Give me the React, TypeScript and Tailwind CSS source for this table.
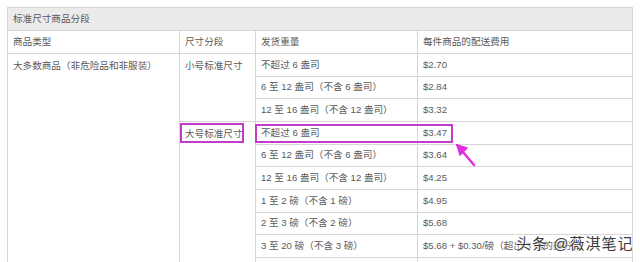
const rows: { weight: string; fee: string }[] = [
  { weight: "不超过 6 盎司", fee: "$2.70" },
  { weight: "6 至 12 盎司（不含 6 盎司）", fee: "$2.84" },
  { weight: "12 至 16 盎司（不含 12 盎司）", fee: "$3.32" },
  { weight: "不超过 6 盎司", fee: "$3.47" },
  { weight: "6 至 12 盎司（不含 6 盎司）", fee: "$3.64" },
  { weight: "12 至 16 盎司（不含 12 盎司）", fee: "$4.25" },
  { weight: "1 至 2 磅（不含 1 磅）", fee: "$4.95" },
  { weight: "2 至 3 磅（不含 2 磅）", fee: "$5.68" },
  { weight: "3 至 20 磅（不含 3 磅）", fee: "$5.68 + $0.30/磅（超出 3 磅的部分）" },
];

const cell = "border border-[#d6d6d6] pl-[5px] align-middle whitespace-nowrap overflow-hidden";

export default function App() {
  return (
    <div
      className="relative w-[640px] h-[262px] bg-white overflow-hidden text-[#5a5a5a] text-[9.6px]"
      style={{ fontFamily: '"Liberation Sans", "Noto Sans CJK SC", sans-serif' }}
    >
      <div className="pt-[7px] pl-[7px]">
        <table className="border-collapse table-fixed w-[625px]">
          <colgroup>
            <col className="w-[172px]" />
            <col className="w-[76px]" />
            <col className="w-[162px]" />
            <col className="w-[215px]" />
          </colgroup>
          <tbody>
            <tr className="h-[23px] bg-[#ebebeb]">
              <td colSpan={4} className={cell}>标准尺寸商品分段</td>
            </tr>
            <tr className="h-[23px]">
              <td className={cell}>商品类型</td>
              <td className={cell}>尺寸分段</td>
              <td className={cell}>发货重量</td>
              <td className={cell}>每件商品的配送费用</td>
            </tr>
            {rows.map((r, i) => (
              <tr key={i} className="h-[22.67px]">
                {i === 0 && (
                  <td rowSpan={10} className={`${cell} align-top pt-[5px]`}>
                    大多数商品（非危险品和非服装）
                  </td>
                )}
                {i === 0 && (
                  <td rowSpan={3} className={`${cell} align-top pt-[5px]`}>
                    小号标准尺寸
                  </td>
                )}
                {i === 3 && (
                  <td rowSpan={7} className={`${cell} align-top pt-[5px]`}>
                    大号标准尺寸
                  </td>
                )}
                <td className={cell}>{r.weight}</td>
                <td className={cell}>{r.fee}</td>
              </tr>
            ))}
            <tr className="h-[22px]">
              <td className={cell}></td>
              <td className={cell}></td>
            </tr>
          </tbody>
        </table>
      </div>

      {/* highlight boxes */}
      <div className="absolute left-[180px] top-[123px] w-[64px] h-[20px] border-2 border-[#c43ccc]" />
      <div className="absolute left-[255px] top-[124px] w-[198px] h-[19px] border-2 border-[#c43ccc]" />
      <svg className="absolute left-[452px] top-[140px]" width="28" height="30" viewBox="0 0 28 30">
        <path d="M5 5 L22 25" stroke="#e02fe0" strokeWidth="2.5" strokeLinecap="round" />
        <path d="M5 5 L15 8 L8 15 Z" fill="#e02fe0" stroke="#e02fe0" strokeWidth="1.5" strokeLinejoin="round" />
      </svg>

      {/* watermark */}
      <div
        className="absolute left-[516px] top-[233px] text-[15px] text-[#3a3a3a] whitespace-nowrap tracking-[1px]"
        style={{ textShadow: "0 0 2px #fff, 0 0 2px #fff, 0 0 3px #fff" }}
      >
        头条 @薇淇笔记
      </div>
    </div>
  );
}
